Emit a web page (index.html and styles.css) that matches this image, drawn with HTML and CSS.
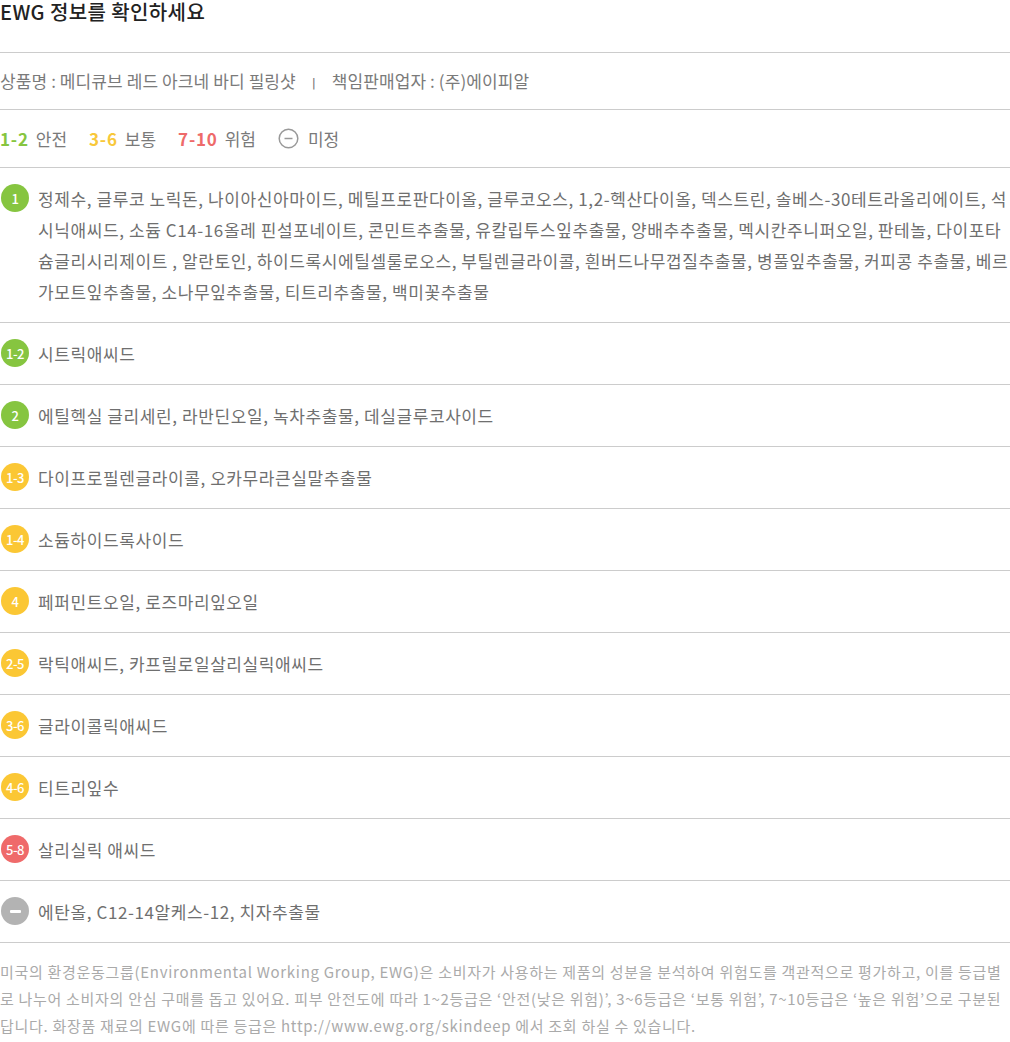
FILE: index.html
```html
<!DOCTYPE html>
<html>
<head>
    <title>EWG 정보</title>
    <meta name="viewport" content="width=device-width, initial-scale=1.0">
    <link rel="stylesheet" href="styles.css">
</head>
<body>
    <div class="ewg">
        <h2 class="ewg-title">EWG 정보를 확인하세요</h2>

        <p class="product">상품명 : 메디큐브 레드 아크네 바디 필링샷 <span class="sep">ㅣ</span> 책임판매업자 : (주)에이피알</p>

        <div class="legend">
            <span class="grade green">1-2</span><span class="label">안전</span>
            <span class="grade yellow">3-6</span><span class="label">보통</span>
            <span class="grade red">7-10</span><span class="label">위험</span>
            <svg class="none-icon" width="21" height="21" viewBox="0 0 21 21"><circle cx="10.5" cy="10.5" r="9.3" fill="none" stroke="#999" stroke-width="1.5"/><line x1="6.5" y1="10.5" x2="14.5" y2="10.5" stroke="#999" stroke-width="1.5"/></svg><span class="label">미정</span>
        </div>

        <ul class="ingredients">
            <li><span class="badge green">1</span><span class="names">정제수, 글루코 노릭돈, 나이아신아마이드, 메틸프로판다이올, 글루코오스, 1,2-헥산다이올, 덱스트린, 솔베스-30테트라올리에이트, 석시닉애씨드, 소듐 C14-16올레 핀설포네이트, 콘민트추출물, 유칼립투스잎추출물, 양배추추출물, 멕시칸주니퍼오일, 판테놀, 다이포타슘글리시리제이트 , 알란토인, 하이드록시에틸셀룰로오스, 부틸렌글라이콜, 흰버드나무껍질추출물, 병풀잎추출물, 커피콩 추출물, 베르가모트잎추출물, 소나무잎추출물, 티트리추출물, 백미꽃추출물</span></li>
            <li><span class="badge green">1-2</span><span class="names">시트릭애씨드</span></li>
            <li><span class="badge green">2</span><span class="names">에틸헥실 글리세린, 라반딘오일, 녹차추출물, 데실글루코사이드</span></li>
            <li><span class="badge yellow">1-3</span><span class="names">다이프로필렌글라이콜, 오카무라큰실말추출물</span></li>
            <li><span class="badge yellow">1-4</span><span class="names">소듐하이드록사이드</span></li>
            <li><span class="badge yellow">4</span><span class="names">페퍼민트오일, 로즈마리잎오일</span></li>
            <li><span class="badge yellow">2-5</span><span class="names">락틱애씨드, 카프릴로일살리실릭애씨드</span></li>
            <li><span class="badge yellow">3-6</span><span class="names">글라이콜릭애씨드</span></li>
            <li><span class="badge yellow">4-6</span><span class="names">티트리잎수</span></li>
            <li><span class="badge red">5-8</span><span class="names">살리실릭 애씨드</span></li>
            <li><span class="badge gray"><i class="dash"></i></span><span class="names">에탄올, C12-14알케스-12, 치자추출물</span></li>
        </ul>

        <p class="note">미국의 환경운동그룹(Environmental Working Group, EWG)은 소비자가 사용하는 제품의 성분을 분석하여 위험도를 객관적으로 평가하고, 이를 등급별로 나누어 소비자의 안심 구매를 돕고 있어요. 피부 안전도에 따라 1~2등급은 ‘안전(낮은 위험)’, 3~6등급은 ‘보통 위험’, 7~10등급은 ‘높은 위험’으로 구분된답니다. 화장품 재료의 EWG에 따른 등급은 http://www.ewg.org/skindeep 에서 조회 하실 수 있습니다.</p>
    </div>
</body>
</html>
```

FILE: styles.css
```css
body {
    margin: 0;
    background: #fff;
    font-family: "Noto Sans CJK KR", "Noto Sans", sans-serif;
    color: #707070;
}
.ewg {
    width: 1010px;
}
.ewg-title {
    margin: 0;
    height: 53px;
    padding-top: 2px;
    font-size: 20px;
    font-weight: 500;
    letter-spacing: 0.4px;
    color: #222;
    line-height: 20px;
    border-bottom: 1px solid #ccc;
    box-sizing: border-box;
}
.product {
    margin: 0;
    height: 57px;
    line-height: 56px;
    font-size: 17px;
    letter-spacing: 0.1px;
    color: #7a7a7a;
    border-bottom: 1px solid #ccc;
    box-sizing: border-box;
    white-space: nowrap;
}
.sep {
    margin: 0 8px;
    font-size: 13px;
}
.legend {
    display: flex;
    align-items: center;
    height: 58px;
    border-bottom: 1px solid #ccc;
    box-sizing: border-box;
    font-size: 17px;
}
.grade {
    font-weight: bold;
    letter-spacing: 0.8px;
    margin-right: 7px;
}
.label {
    color: #7a7a7a;
    margin-right: 22px;
}
.none-icon {
    margin-right: 9px;
}
.green { color: #86c540; }
.yellow { color: #f8c83a; }
.red { color: #ee6a6a; }
.ingredients {
    list-style: none;
    margin: 0;
    padding: 0;
}
.ingredients li {
    display: flex;
    align-items: flex-start;
    padding: 15px 0;
    border-bottom: 1px solid #ccc;
    font-size: 17px;
    line-height: 31px;
}
.badge {
    flex: none;
    width: 28px;
    height: 28px;
    margin: 1px 9px 0 1px;
    border-radius: 50%;
    color: #fff;
    font-size: 13px;
    font-weight: 500;
    letter-spacing: -0.5px;
    display: flex;
    align-items: center;
    justify-content: center;
}
.badge.green { background: #86c540; color: #fff; }
.badge.yellow { background: #fbc734; color: #fff; }
.badge.red { background: #ef6a6a; color: #fff; }
.badge.gray { background: #b3b3b3; }
.dash {
    display: block;
    width: 11px;
    height: 3px;
    background: #fff;
    border-radius: 1px;
}
.names {
    color: #6f6f6f;
    letter-spacing: 0.6px;
}
.note {
    margin: 0;
    padding-top: 15px;
    font-size: 15px;
    letter-spacing: 0.7px;
    line-height: 27px;
    color: #aaa;
    padding-right: 8px;
}
```
